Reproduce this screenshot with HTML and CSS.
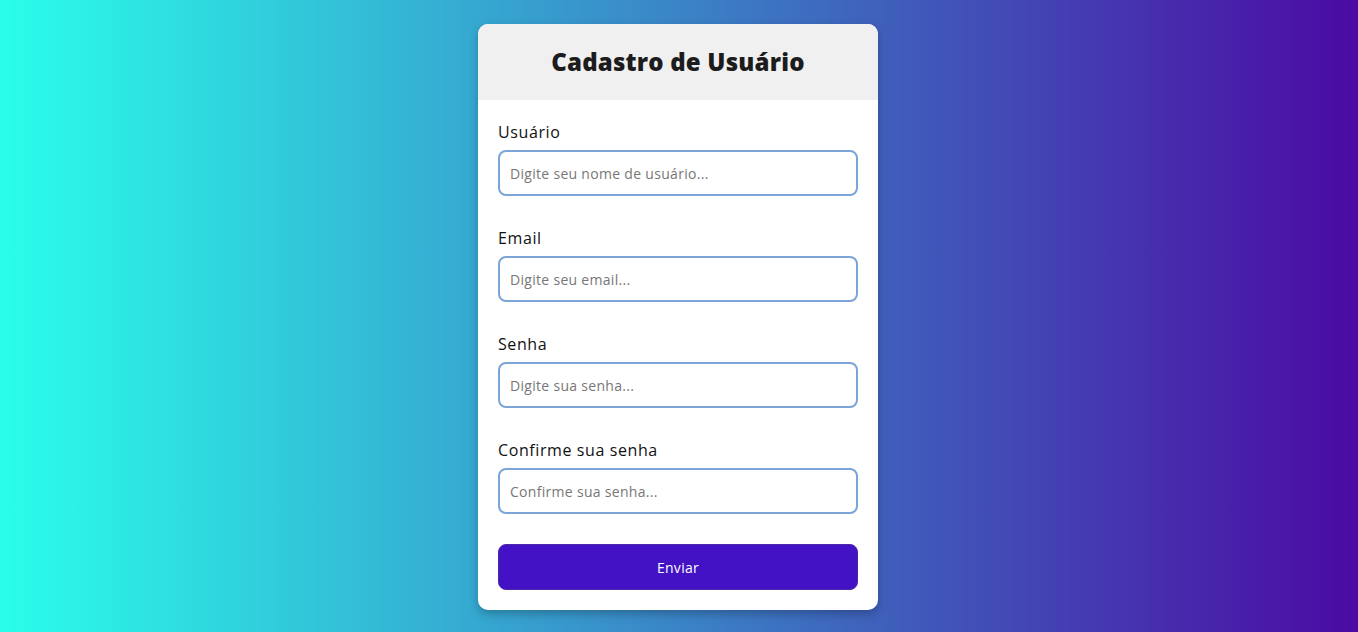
FILE: index.html
```html
<!DOCTYPE html>
<html lang="pt-BR">
<head>
<meta charset="utf-8">
<title>Cadastro de Usuário</title>
<link rel="stylesheet" href="styles.css">
</head>
<body>
<main class="page">
  <form class="card">
    <div class="card-header">
      <h1 class="title">Cadastro de Usuário</h1>
    </div>
    <div class="card-body">
      <div class="field">
        <label class="label" for="u">Usuário</label>
        <input class="input" id="u" type="text" placeholder="Digite seu nome de usuário...">
      </div>
      <div class="field">
        <label class="label" for="e">Email</label>
        <input class="input" id="e" type="email" placeholder="Digite seu email...">
      </div>
      <div class="field">
        <label class="label" for="s">Senha</label>
        <input class="input" id="s" type="password" placeholder="Digite sua senha...">
      </div>
      <div class="field">
        <label class="label" for="c">Confirme sua senha</label>
        <input class="input" id="c" type="password" placeholder="Confirme sua senha...">
      </div>
      <button class="button" type="button">Enviar</button>
    </div>
  </form>
</main>
</body>
</html>
```
FILE: styles.css
```css
* { box-sizing: border-box; }
html, body { margin: 0; height: 100%; }
body {
  font-family: "Open Sans", "Noto Sans", sans-serif;
  background: linear-gradient(to right, #2afeea, #4b0aa3);
}
.page {
  display: flex;
  justify-content: center;
  padding: 24px 2px 0 0;
}
.card {
  width: 400px;
  background: #fff;
  border-radius: 10px;
  overflow: hidden;
  box-shadow: 0 4px 10px rgba(0,0,0,0.25);
}
.card-header {
  background: #f0f0f0;
  height: 76px;
  display: flex;
  align-items: center;
  justify-content: center;
  padding-bottom: 2px;
}
.title {
  margin: 0;
  font-size: 24px;
  font-weight: 800;
  letter-spacing: 0.2px;
  color: #1c1c1c;
}
.card-body {
  padding: 20px;
  display: flex;
  flex-direction: column;
}
.field {
  display: flex;
  flex-direction: column;
  gap: 6px;
  margin-bottom: 30px;
}
.label {
  font-size: 16px;
  line-height: 24px;
  letter-spacing: 0.6px;
  color: #111;
}
.input {
  height: 46px;
  border: 2px solid #7ba4d8;
  border-radius: 8px;
  padding: 0 10px;
  font-family: inherit;
  font-size: 14px;
  letter-spacing: 0.3px;
  outline: none;
}
.input::placeholder { color: #777; }
.button {
  height: 46px;
  border: 1px solid #4a2aa8;
  border-radius: 8px;
  background: #4212c4;
  color: #fff;
  font-family: inherit;
  font-size: 14px;
  letter-spacing: 0.3px;
}
```
